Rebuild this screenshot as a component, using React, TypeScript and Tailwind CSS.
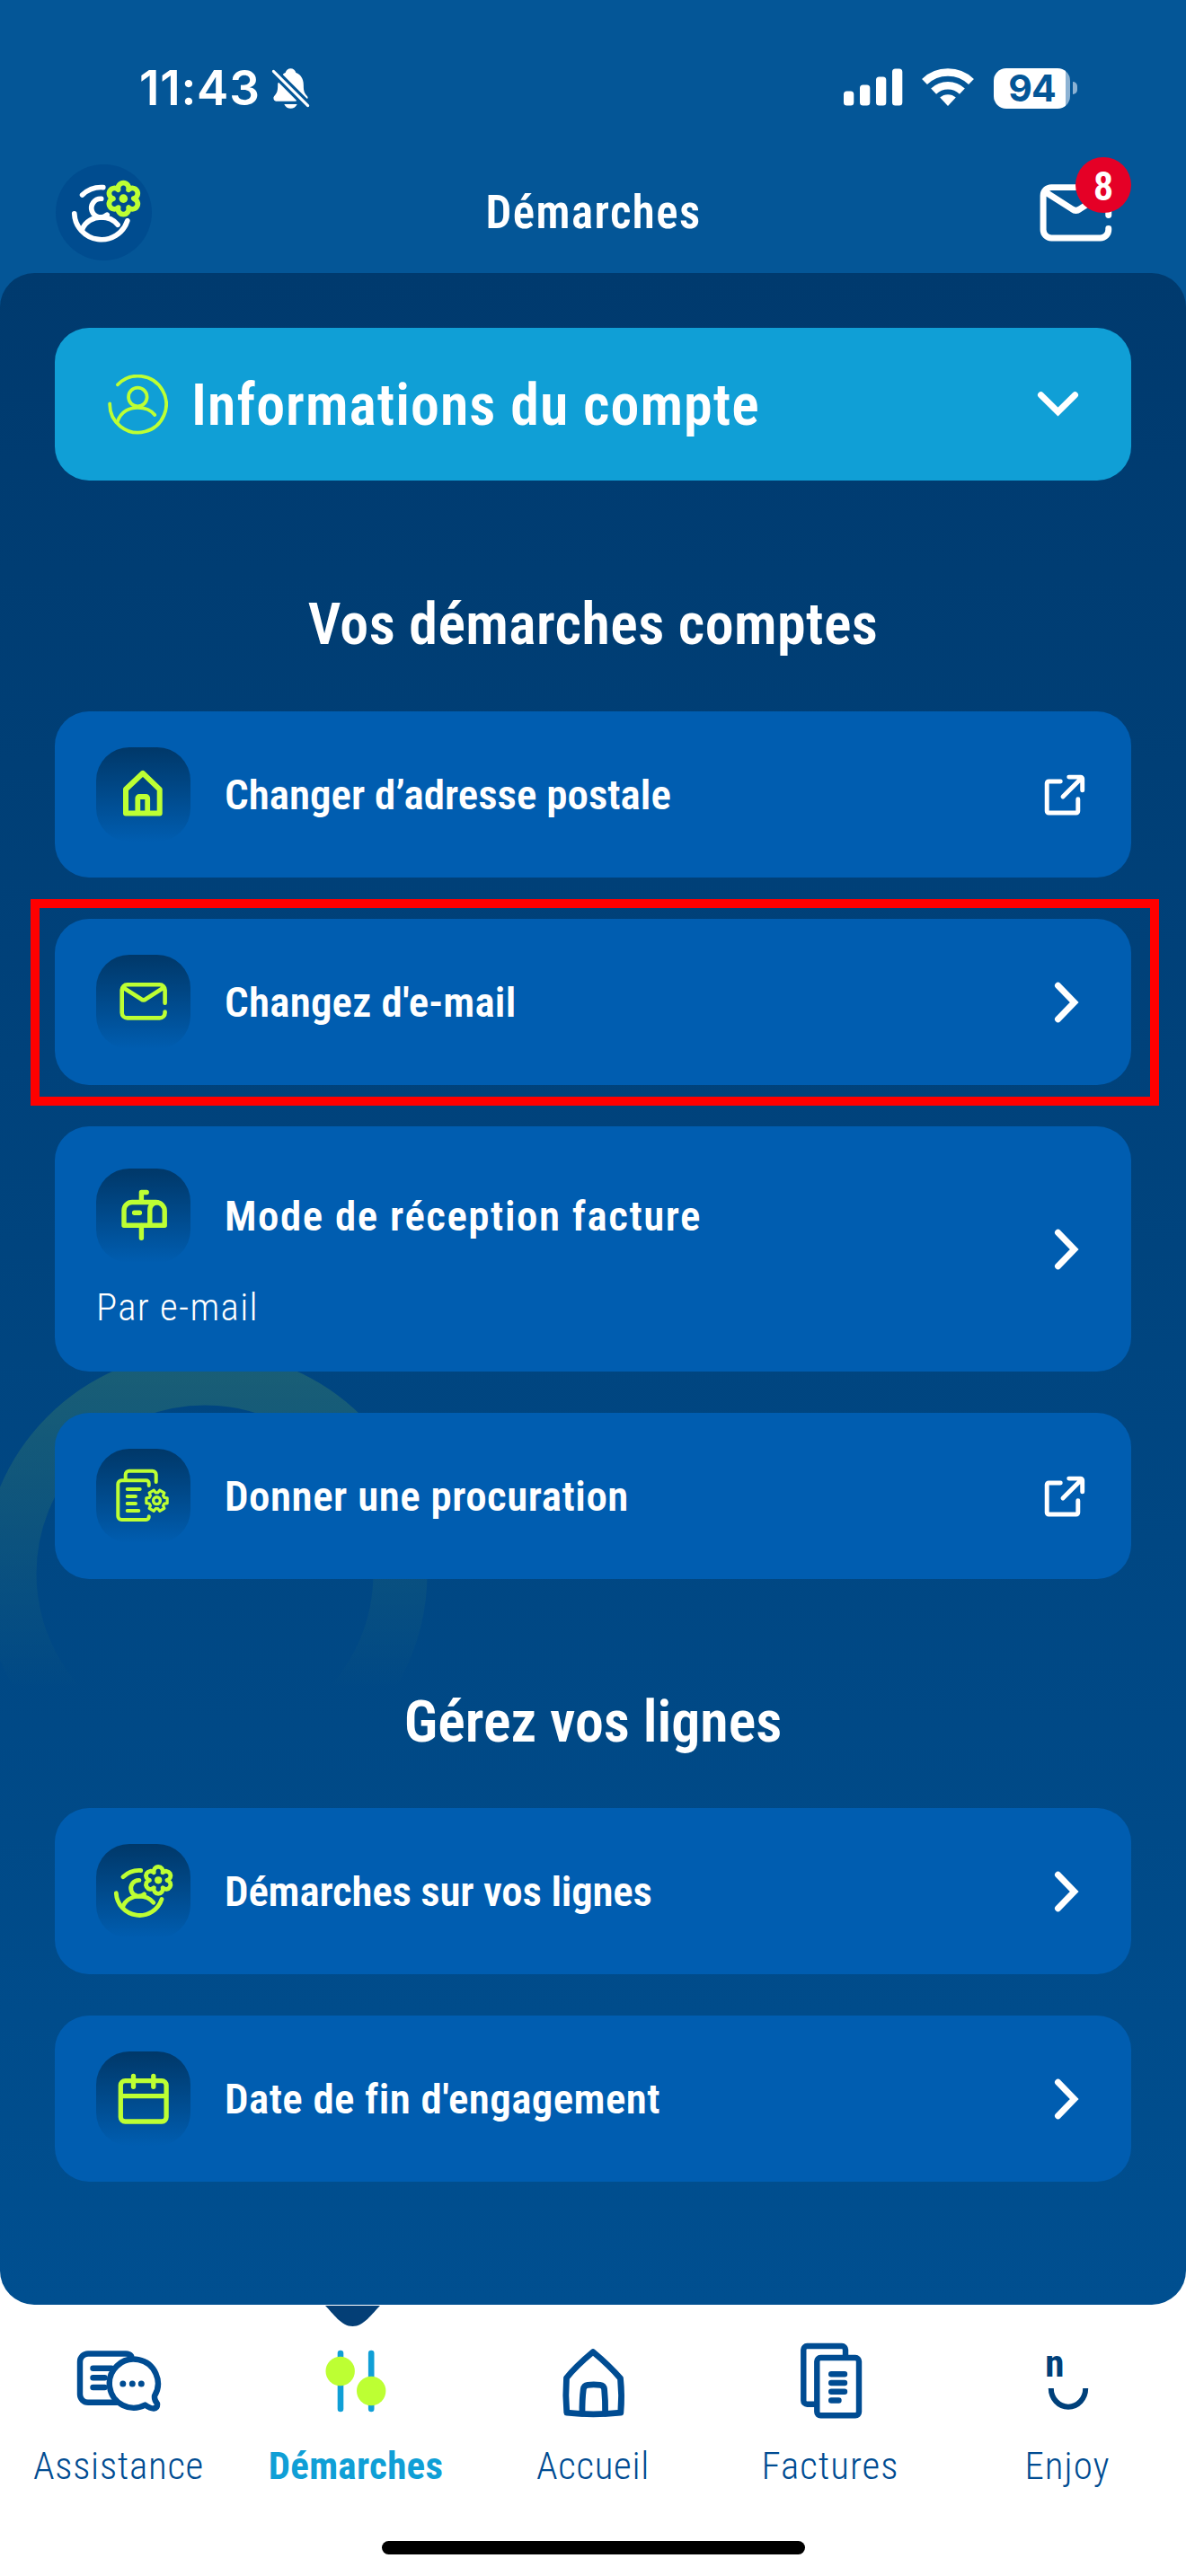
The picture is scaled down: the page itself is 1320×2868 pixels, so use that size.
import { ReactNode } from "react";
import { IoNotificationsOff } from "react-icons/io5";

interface CardProps {
  icon: ReactNode;
  label: string;
  labelClass?: string;
  detail?: string;
  external?: boolean;
}

interface TabProps {
  label: string;
  labelClass?: string;
  icon: ReactNode;
  active?: boolean;
}

// Six teeth, starting on the horizontal axis.
const toothedGear = (cx: number, cy: number, outer: number, inner: number) => {
  const points: string[] = [];
  for (let i = 0; i < 6; i++) {
    const a = (i * Math.PI) / 3;
    [
      [outer, -0.25],
      [outer, 0.25],
      [inner, 0.38],
      [inner, 0.67],
    ].forEach(([r, d]) => {
      points.push(
        `${(cx + r * Math.cos(a + d)).toFixed(2)} ${(cy + r * Math.sin(a + d)).toFixed(2)}`,
      );
    });
  }
  return `M${points.join("L")}Z`;
};

// Six round lobes, the first one pointing up.
const lobedGear = (cx: number, cy: number, r: number, lobe: number) => {
  let d = "";
  for (let i = 0; i <= 6; i++) {
    const a = ((i * 60 - 120) * Math.PI) / 180;
    const x = (cx + r * Math.cos(a)).toFixed(2);
    const y = (cy + r * Math.sin(a)).toFixed(2);
    d += i === 0 ? `M${x} ${y}` : `A${lobe} ${lobe} 0 1 1 ${x} ${y}`;
  }
  return d + "Z";
};

const TileSvg = ({ children, width = 5 }: { children: ReactNode; width?: number }) => (
  <svg
    viewBox="0 0 105 105"
    className="size-full"
    fill="none"
    stroke="#bdff33"
    strokeWidth={width}
    strokeLinecap="round"
    strokeLinejoin="round"
  >
    {children}
  </svg>
);

const HouseIcon = () => (
  <TileSvg width={6}>
    <path d="M33 73.5V46.8L52 28.8L70.7 46.8V73.5Z" />
    <path d="M46.3 73V56.8a1.8 1.8 0 0 1 1.8-1.8H55.4a1.8 1.8 0 0 1 1.8 1.8V73" strokeWidth={5.8} />
  </TileSvg>
);

const mailPath =
  "M76.6 53.7V39.3a6 6 0 0 0-6-6H34.7a6 6 0 0 0-6 6V64.4a6 6 0 0 0 6 6H70.6a6 6 0 0 0 6-6V63.5M30 36.5L50 49.3Q52.7 51.3 55.4 49.3L75.3 36.5";

const MailIcon = () => (
  <TileSvg width={4.6}>
    <path d={mailPath} />
  </TileSvg>
);

const MailboxIcon = () => (
  <TileSvg width={5.4}>
    <path d="M31 63.3V46.5a9 9 0 0 1 9-9H66.5a9.7 9.7 0 0 1 9.7 9.7V63.3Z" />
    <path d="M59.8 63V46.5a8.2 8.2 0 0 1 8.2-8.8" />
    <path d="M50.4 37V26.5H56.2M50.4 63.5V77.3M42.6 49.2H48.4" />
  </TileSvg>
);

const ProcurationIcon = () => (
  <TileSvg width={4}>
    <path d="M58.7 41V38.3a3 3 0 0 0-3-3H28.3a4 4 0 0 0-4 4V75a4 4 0 0 0 4 4H55.7a3 3 0 0 0 3-3V75.3" />
    <path d="M32.7 34V28.7a4 4 0 0 1 4-4H62.7a4 4 0 0 1 4 4V37" />
    <path d="M34.7 45H48.7M34.7 53H44M34.7 61H44M34.7 69H47.3" />
    <path d={toothedGear(67.5, 57.7, 12, 9)} strokeWidth={3.2} />
    <circle cx="67.5" cy="57.7" r="3.9" strokeWidth={3.4} />
  </TileSvg>
);

const AccountMark = () => (
  <>
    <path d="M29.9 36.7A26.2 26.2 0 0 1 49.8 29.5" />
    <path d="M22.3 54.6A26 26 0 0 0 73 61.5" />
    <path d="M48 40.4A8.9 8.9 0 1 0 53.6 55.8" />
    <path d="M29.6 70.5C32.5 61.5 41 58.2 48 58.2C55 58.2 60.5 61.3 63.8 65.3" />
  </>
);

const GearMark = () => (
  <>
    <path d={lobedGear(69.2, 40.3, 9.8, 5.1)} />
    <circle cx="69.2" cy="40.3" r="4.1" fill="#bdff33" stroke="none" />
  </>
);

const LinesIcon = () => (
  <TileSvg width={4.8}>
    <AccountMark />
    <GearMark />
  </TileSvg>
);

const CalendarIcon = () => (
  <TileSvg width={5.3}>
    <rect x="27.3" y="32.6" width="50.8" height="45.4" rx="5" />
    <path d="M28 49.7H77.5M41.5 27.3V39.3M63.8 27.3V39.3" />
  </TileSvg>
);

const ExternalIcon = () => (
  <svg
    viewBox="0 0 46 46"
    className="size-[46px]"
    fill="none"
    stroke="#fff"
    strokeWidth={4.9}
    strokeLinecap="round"
    strokeLinejoin="round"
  >
    <path d="M18.3 8H5.2a2 2 0 0 0-2 2V41a2 2 0 0 0 2 2H35.8a2 2 0 0 0 2-2V27.7" />
    <path d="M27.7 3.1H40.7a2 2 0 0 1 2 2V17.9M21 25L42 4" />
  </svg>
);

const ChevronIcon = () => (
  <svg viewBox="0 0 46 46" className="size-[46px]" fill="none" stroke="#fff" strokeWidth={7} strokeLinecap="round">
    <path d="M15.5 4.3L33.7 23L15.5 41.7" />
  </svg>
);

const Card = ({ icon, label, labelClass = "", detail, external }: CardProps) => (
  <button
    className={`flex w-full items-center justify-between rounded-[38px] bg-[#005db0] pr-[51px] pl-[46px] text-left ${
      detail ? "h-[273px]" : "h-[185px]"
    }`}
  >
    <span className="flex flex-col">
      <span className="flex items-center gap-[38px]">
        <span className="size-[105px] rounded-[37px] bg-linear-to-b from-[#003869] to-[#005db0]">
          {icon}
        </span>
        <span className={`text-[47px] leading-none font-semibold ${labelClass}`}>{label}</span>
      </span>
      {detail && (
        <span className="mt-[24px] text-[43px] leading-[50px] font-light tracking-[1.3px]">
          {detail}
        </span>
      )}
    </span>
    {external ? <ExternalIcon /> : <ChevronIcon />}
  </button>
);

const StatusBar = () => (
  <div className="flex h-[80px] items-center justify-between pr-[121px] pl-[155px]">
    <div className="flex items-center gap-[8px]">
      <span className="font-['Inter',sans-serif] text-[53px] leading-none font-semibold tracking-[0.8px]">
        11:43
      </span>
      <IoNotificationsOff className="size-[51px]" />
    </div>
    <div className="flex items-center">
      <svg viewBox="0 0 66 46" className="h-[46px] w-[66px] fill-white">
        <rect x="0" y="26.5" width="11.3" height="16" rx="3.5" />
        <rect x="18" y="19.5" width="11.3" height="23" rx="3.5" />
        <rect x="36" y="10.5" width="11.3" height="32" rx="3.5" />
        <rect x="54" y="1.5" width="11.3" height="41" rx="3.5" />
      </svg>
      <svg
        viewBox="-30 -43 60 46"
        className="ml-[20.5px] h-[46px] w-[60px]"
        fill="none"
        stroke="#fff"
        strokeWidth={8.5}
      >
        <path d="M-26 -27A37.6 37.6 0 0 1 26 -27M-15.9 -16.4A23 23 0 0 1 15.9 -16.4" />
        <path d="M0 0L-8.8 -9.4A13 13 0 0 1 8.8 -9.4Z" fill="#fff" stroke="none" />
      </svg>
      <div className="ml-[21px] flex h-[45px] w-[85px] items-center justify-center rounded-[14px] bg-linear-to-r from-white from-94% to-[#8cb2d3] to-94%">
        <span className="font-['Inter',sans-serif] text-[41px] leading-none font-bold tracking-[-1px] text-[#045697]">
          94
        </span>
      </div>
      <span className="ml-[3px] h-[14px] w-[5px] rounded-r-full bg-[#8cb2d3]" />
    </div>
  </div>
);

const Header = () => (
  <header className="h-[304px] bg-[#045697] pt-[58px] text-white">
    <StatusBar />
    <div className="mt-[45px] grid h-[107px] grid-cols-3 items-center pr-[61px] pl-[62px]">
      <div className="flex size-[107px] items-center justify-center rounded-full bg-[#004c8f]">
        <svg
          viewBox="20 23 66 61"
          className="ml-[5px] h-[71px] w-[77px] overflow-visible"
          fill="none"
          stroke="#fff"
          strokeWidth={4.9}
          strokeLinecap="round"
          strokeLinejoin="round"
        >
          <AccountMark />
          <g stroke="#bdff33">
            <GearMark />
          </g>
        </svg>
      </div>
      <h1 className="justify-self-center text-[51px] leading-none font-semibold tracking-[1.4px]">
        Démarches
      </h1>
      <div className="relative justify-self-end pr-[21px]">
        <svg
          viewBox="26 31 53.4 42"
          className="h-[64px] w-[81px]"
          fill="none"
          stroke="#fff"
          strokeWidth={4.6}
          strokeLinecap="round"
          strokeLinejoin="round"
        >
          <path d={mailPath} />
        </svg>
        <span className="absolute -top-[30px] right-0 flex size-[62px] items-center justify-center rounded-full bg-[#e50026] pt-[3px] text-[45px] leading-none font-semibold">
          8
        </span>
      </div>
    </div>
  </header>
);

const Tab = ({ label, labelClass = "", icon, active }: TabProps) => (
  <button className="relative flex flex-1 flex-col items-center pt-[36px]">
    {active && (
      <svg viewBox="0 0 61 24" className="absolute top-px left-[98px] h-[24px] w-[61px] fill-[#043f76]">
        <path d="M0 0H61C52 9 43 23 30.5 23C18 23 9 9 0 0Z" />
      </svg>
    )}
    {icon}
    <span
      className={`mt-[17px] text-[43px] leading-[60px] ${
        active ? "font-bold text-[#109fd6]" : "font-light"
      } ${labelClass}`}
    >
      {label}
    </span>
  </button>
);

const TabSvg = ({ children, viewBox, width }: { children: ReactNode; viewBox: string; width: number }) => (
  <svg
    viewBox={viewBox}
    className="size-[96px]"
    fill="none"
    stroke="currentColor"
    strokeWidth={width}
    strokeLinecap="round"
    strokeLinejoin="round"
  >
    {children}
  </svg>
);

const AssistanceIcon = () => (
  <TabSvg viewBox="0 -14 96 96" width={6.4}>
    <path d="M62 7Q60 4.5 56 4.5H14a9 9 0 0 0-9 9V49.8a9 9 0 0 0 9 9H46M19.5 20.7H40M19.5 31.3H32.5M19.5 42H32.5" />
    <path d="M88 51.5A27 27 0 1 0 77.5 61.5Q83 65.5 87 65.5Q91.5 65 91 60Q87.5 56 88 51.5Z" fill="#fff" />
    <g fill="currentColor" stroke="none">
      <circle cx="52.8" cy="38" r="3.5" />
      <circle cx="63.3" cy="38" r="3.5" />
      <circle cx="73.3" cy="38" r="3.5" />
    </g>
  </TabSvg>
);

const SlidersIcon = () => (
  <TabSvg viewBox="0 0 96 96" width={6.6}>
    <path d="M31 18V80M65.2 18V80" stroke="#109fd6" />
    <g fill="#bdff33" stroke="none">
      <circle cx="30.7" cy="38" r="16.2" />
      <circle cx="65.2" cy="60" r="16.2" />
    </g>
  </TabSvg>
);

const HomeIcon = () => (
  <TabSvg viewBox="-12 -10 96 96" width={6.8}>
    <path d="M36 6.5C27 14 14 26 6.5 35.5Q5 55 6.8 74.2Q36 77.5 66.8 74.2Q68.5 55 66.5 36C58 26 45 14 36 6.5Z" />
    <path d="M24 75Q23.8 60 25.3 48Q26 43.8 30 43.3Q36.5 42.5 44 43.3Q48 43.8 48.6 48Q49.8 60 49.6 75" />
  </TabSvg>
);

const BillsIcon = () => (
  <TabSvg viewBox="-14 -6 96 96" width={6.4}>
    <path d="M51 15V8a4 4 0 0 0-4-4H8.3a4 4 0 0 0-4 4V64.7a4 4 0 0 0 4 4H18" />
    <rect x="19.3" y="17" width="46.7" height="64.3" rx="4" />
    <path d="M35.2 35.3H50M35.2 45H50M35.2 54.7H50M35.2 64.5H43.5" />
  </TabSvg>
);

const EnjoyIcon = () => (
  <svg viewBox="0 0 96 96" className="size-[96px] text-[#00407a]">
    <text x="23.3" y="43.8" className="fill-current text-[43px] font-bold">
      n
    </text>
    <path d="M29.8 57A19 20.5 0 0 0 68.2 57" fill="none" stroke="currentColor" strokeWidth={6} />
  </svg>
);

const App = () => (
  <div className="w-[1320px] bg-white font-['Roboto_Condensed',Roboto,sans-serif]">
    <Header />
    <div className="bg-[linear-gradient(#045697_50%,#fff_50%)]">
      <main className="relative h-[2262px] overflow-hidden rounded-[38px] bg-linear-to-b from-[#003a6e] to-[#004f90] px-[61px] pt-[61px] text-white">
        {/* Fading ring behind the cards */}
        <svg viewBox="0 0 500 500" className="absolute top-[1198px] left-[-22px] size-[500px]" fill="none">
          <defs>
            <linearGradient id="ring" x1="0" y1="0" x2="0" y2="1">
              <stop offset="0" stopColor="#bdff33" stopOpacity="0.13" />
              <stop offset="0.8" stopColor="#bdff33" stopOpacity="0" />
            </linearGradient>
          </defs>
          <circle cx="250" cy="250" r="217.5" stroke="url(#ring)" strokeWidth={60} />
        </svg>

        <div className="relative">
          <button className="flex h-[170px] w-full items-center rounded-[38px] bg-[#109fd6] pr-[57px] pl-[59px] text-left">
            <svg
              viewBox="0 0 67 67"
              className="size-[67px]"
              fill="none"
              stroke="#bdff33"
              strokeWidth={3.8}
              strokeLinecap="round"
            >
              <path d="M11 11.3A31.4 31.4 0 1 1 2.2 32.3" />
              <circle cx="33.3" cy="25" r="10.3" />
              <path d="M10.6 53C14.5 40.5 25 36.8 33.3 36.8C42 36.8 48.5 40 52.3 45" />
            </svg>
            <span className="ml-[26px] flex-1 pt-[3px] text-[64px] leading-none font-semibold tracking-[1px]">
              Informations du compte
            </span>
            <svg viewBox="0 0 50 50" className="size-[50px]" fill="none" stroke="#fff" strokeWidth={7} strokeLinecap="round">
              <path d="M6.5 14.7L25.5 33.5L44.5 14.7" />
            </svg>
          </button>

          <h2 className="flex h-[257px] items-center justify-center pt-[64px] text-[64px] leading-none font-semibold tracking-[0.4px]">
            Vos démarches comptes
          </h2>
          <div className="flex flex-col gap-[46px]">
            <Card icon={<HouseIcon />} label="Changer d’adresse postale" external />
            <div className="relative">
              <Card icon={<MailIcon />} label="Changez d'e-mail" labelClass="tracking-[0.2px]" />
              <span className="pointer-events-none absolute -top-[22px] -right-[31px] -bottom-[23px] -left-[27px] border-10 border-[#ff0000]" />
            </div>
            <Card
              icon={<MailboxIcon />}
              label="Mode de réception facture"
              labelClass="tracking-[1.5px]"
              detail="Par e-mail"
            />
            <Card icon={<ProcurationIcon />} label="Donner une procuration" labelClass="tracking-[0.5px]" external />
          </div>

          <h2 className="flex h-[255px] items-center justify-center pt-[64px] text-[64px] leading-none font-semibold">
            Gérez vos lignes
          </h2>
          <div className="flex flex-col gap-[46px]">
            <Card icon={<LinesIcon />} label="Démarches sur vos lignes" labelClass="tracking-[-0.2px]" />
            <Card icon={<CalendarIcon />} label="Date de fin d'engagement" labelClass="tracking-[0.4px]" />
          </div>
        </div>
      </main>
    </div>

    <nav className="flex h-[263px] text-[#004c92]">
      <Tab icon={<AssistanceIcon />} label="Assistance" labelClass="tracking-[0.7px]" />
      <Tab icon={<SlidersIcon />} label="Démarches" labelClass="tracking-[0.3px]" active />
      <Tab icon={<HomeIcon />} label="Accueil" labelClass="tracking-[0.7px]" />
      <Tab icon={<BillsIcon />} label="Factures" labelClass="tracking-[1px]" />
      <Tab icon={<EnjoyIcon />} label="Enjoy" labelClass="tracking-[1px]" />
    </nav>
    <div className="flex h-[39px] justify-center">
      <span className="h-[15px] w-[471px] rounded-full bg-black" />
    </div>
  </div>
);

export default App;
